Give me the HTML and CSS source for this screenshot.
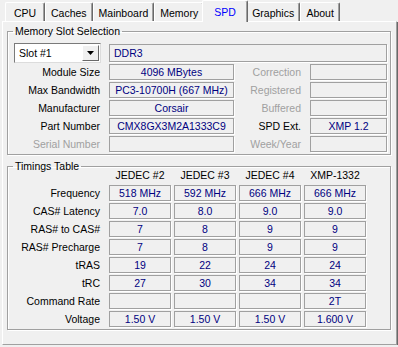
FILE: index.html
```html
<!DOCTYPE html>
<html>

<head>
    <meta charset="UTF-8">
    <link rel="stylesheet" href="styles.css">
</head>

<body>
    <div class="tabs">
        <div class="tab">CPU</div>
        <div class="tab">Caches</div>
        <div class="tab">Mainboard</div>
        <div class="tab">Memory</div>
        <div class="tab active">SPD</div>
        <div class="tab">Graphics</div>
        <div class="tab">About</div>
    </div>

    <div class="panel">
        <fieldset class="group slots">
            <legend>Memory Slot Selection</legend>
            <div class="slot-row">
                <div class="select">
                    <span class="select-text">Slot #1</span>
                    <span class="select-btn">
                        <svg width="7" height="4" viewBox="0 0 7 4"><path d="M0 0h7L3.5 4z" fill="#000"/></svg>
                    </span>
                </div>
                <div class="field left">DDR3</div>
            </div>

            <div class="row">
                <span class="label">Module Size</span>
                <span class="field">4096 MBytes</span>
                <span class="label dim">Correction</span>
                <span class="field"></span>
            </div>
            <div class="row">
                <span class="label">Max Bandwidth</span>
                <span class="field">PC3-10700H (667 MHz)</span>
                <span class="label dim">Registered</span>
                <span class="field"></span>
            </div>
            <div class="row">
                <span class="label">Manufacturer</span>
                <span class="field">Corsair</span>
                <span class="label dim">Buffered</span>
                <span class="field"></span>
            </div>
            <div class="row">
                <span class="label">Part Number</span>
                <span class="field">CMX8GX3M2A1333C9</span>
                <span class="label">SPD Ext.</span>
                <span class="field">XMP 1.2</span>
            </div>
            <div class="row">
                <span class="label dim">Serial Number</span>
                <span class="field"></span>
                <span class="label dim">Week/Year</span>
                <span class="field"></span>
            </div>
        </fieldset>

        <fieldset class="group timings">
            <legend>Timings Table</legend>
            <div class="trow head">
                <span></span>
                <span>JEDEC #2</span>
                <span>JEDEC #3</span>
                <span>JEDEC #4</span>
                <span>XMP-1332</span>
            </div>
            <div class="trow">
                <span class="label">Frequency</span>
                <span class="field">518 MHz</span>
                <span class="field">592 MHz</span>
                <span class="field">666 MHz</span>
                <span class="field">666 MHz</span>
            </div>
            <div class="trow">
                <span class="label">CAS# Latency</span>
                <span class="field">7.0</span>
                <span class="field">8.0</span>
                <span class="field">9.0</span>
                <span class="field">9.0</span>
            </div>
            <div class="trow">
                <span class="label">RAS# to CAS#</span>
                <span class="field">7</span>
                <span class="field">8</span>
                <span class="field">9</span>
                <span class="field">9</span>
            </div>
            <div class="trow">
                <span class="label">RAS# Precharge</span>
                <span class="field">7</span>
                <span class="field">8</span>
                <span class="field">9</span>
                <span class="field">9</span>
            </div>
            <div class="trow">
                <span class="label">tRAS</span>
                <span class="field">19</span>
                <span class="field">22</span>
                <span class="field">24</span>
                <span class="field">24</span>
            </div>
            <div class="trow">
                <span class="label">tRC</span>
                <span class="field">27</span>
                <span class="field">30</span>
                <span class="field">34</span>
                <span class="field">34</span>
            </div>
            <div class="trow">
                <span class="label">Command Rate</span>
                <span class="field"></span>
                <span class="field"></span>
                <span class="field"></span>
                <span class="field">2T</span>
            </div>
            <div class="trow">
                <span class="label">Voltage</span>
                <span class="field">1.50 V</span>
                <span class="field">1.50 V</span>
                <span class="field">1.50 V</span>
                <span class="field">1.600 V</span>
            </div>
        </fieldset>
    </div>
</body>
</html>
```

FILE: styles.css
```css
:root {
    --face: #f0f0f0;
    --shadow: #a0a0a0;
    --dark: #696969;
    --value: #000080;
}

* {
    box-sizing: border-box;
}

body {
    margin: 0;
    background: var(--face);
    font-family: 'Liberation Sans', Arial, sans-serif;
    font-size: 10.5px;
    color: #000;
}

/* tab strip */
.tabs {
    display: flex;
    align-items: flex-end;
    height: 21px;
    margin-left: 2px;
    padding-left: 3px;
}

.tab {
    position: relative;
    height: 19px;
    min-width: 40px;
    padding: 4px 5px 0;
    text-align: center;
    background: var(--face);
    border-top: 1px solid #fff;
    border-left: 1px solid #fff;
    border-right: 1px solid var(--dark);
    border-radius: 2px 2px 0 0;
    box-shadow: inset -1px 0 0 var(--shadow);
}

.tab.active {
    z-index: 1;
    height: 22px;
    min-width: 46px;
    margin: 0 -2px -1px;
    padding-top: 5px;
    color: #0000ff;
}

/* tab page */
.panel {
    height: 324px;
    margin: 0 1px 0 2px;
    padding: 3px 5px 0 4px;
    border-top: 1px solid #fff;
    border-left: 1px solid #fff;
    border-right: 1px solid var(--shadow);
    border-bottom: 1px solid var(--shadow);
    box-shadow: 1px 1px 0 var(--dark);
}

.group {
    margin: 0;
    padding: 5px 3px 2px 0;
    border: 1px solid var(--shadow);
    box-shadow: inset 1px 1px 0 #fff, 1px 1px 0 #fff;
    min-width: 0;
}

.group legend {
    margin-left: 5px;
    padding: 0 2px;
    line-height: 13px;
}

.timings {
    margin-top: 5px;
    padding-top: 0;
}

/* value boxes */
.field {
    display: block;
    height: 16px;
    line-height: 14px;
    text-align: center;
    white-space: nowrap;
    overflow: hidden;
    color: var(--value);
    border: 1px solid var(--shadow);
    box-shadow: 1px 1px 0 #fff;
}

.field.left {
    text-align: left;
    padding-left: 4px;
}

.label {
    text-align: right;
    line-height: 16px;
    white-space: nowrap;
}

.dim {
    color: var(--shadow);
}

/* memory slot section */
.slot-row {
    display: grid;
    grid-template-columns: 87px 1fr;
    column-gap: 8px;
    align-items: center;
    height: 20px;
    margin: 0 0 1px 6px;
}

.slot-row .field {
    height: 18px;
    line-height: 16px;
}

.select {
    display: flex;
    height: 20px;
    background: #fff;
    border: 1px solid #7a7a7a;
    border-right-color: #dcdcdc;
    border-bottom-color: #dcdcdc;
}

.select-text {
    flex: 1;
    padding-left: 4px;
    line-height: 18px;
}

.select-btn {
    display: flex;
    align-items: center;
    justify-content: center;
    width: 17px;
    margin: 1px;
    background: var(--face);
    border: 1px solid #fff;
    border-right-color: var(--dark);
    border-bottom-color: var(--dark);
}

.row {
    display: grid;
    grid-template-columns: 92px 125px 58px 77px;
    column-gap: 9px;
    margin-top: 2px;
}

.slot-row + .row {
    margin-top: 0;
}

/* timings table */
.trow {
    display: grid;
    grid-template-columns: 98px repeat(4, 62px);
    column-gap: 3px;
    margin-top: 2px;
}

.trow .label {
    padding-right: 6px;
}

.trow.head {
    height: 15px;
    margin-top: -5px;
    line-height: 15px;
    text-align: center;
}
```
